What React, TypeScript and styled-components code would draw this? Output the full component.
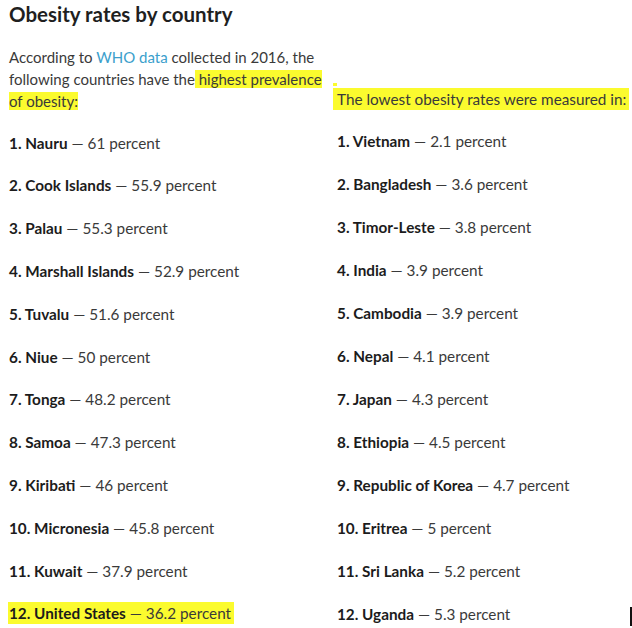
import React from "react";
import styled, { createGlobalStyle } from "styled-components";

const GlobalStyle = createGlobalStyle`
  html, body {
    margin: 0;
    padding: 0;
    background: #fff;
  }
  body {
    font-family: Lato, "Open Sans", Arial, sans-serif;
    color: #3a3a3a;
  }
`;

const Page = styled.main`
  position: relative;
  width: 632px;
  height: 628px;
  padding: 0 0 0 9px;
  box-sizing: border-box;
  overflow: hidden;
`;

const Title = styled.h1`
  margin: 0;
  font-size: 20.5px;
  line-height: 28px;
  font-weight: 700;
  color: #1f1f1f;
`;

const Columns = styled.div`
  display: grid;
  grid-template-columns: 328px 1fr;
  margin-top: 18px;
`;

const Column = styled.section<{ $offset?: number }>`
  padding-top: ${({ $offset }) => $offset || 0}px;
`;

const Intro = styled.p`
  margin: 0;
  font-size: 15px;
  line-height: 22px;
  width: 322px;
`;

const Link = styled.a`
  color: #3c9fcc;
  text-decoration: none;
`;

const Mark = styled.span`
  background: #fbfb2e;
`;

const Heading = styled.p`
  position: relative;
  margin: 0 0 0 -4px;
  font-size: 15.3px;
  line-height: 22px;
  display: inline-block;
  background: #fbfb2e;
  padding: 0 3px 0 4px;

  &::before {
    content: "";
    position: absolute;
    left: 0;
    top: -5px;
    width: 4px;
    height: 3px;
    background: #fbfb2e;
  }
`;

const List = styled.ol<{ $row: number; $top: number }>`
  list-style: none;
  margin: ${({ $top }) => $top}px 0 0;
  padding: 0;

  li {
    font-size: 15.3px;
    line-height: ${({ $row }) => $row}px;
    height: ${({ $row }) => $row}px;
    white-space: nowrap;
  }
`;

const Name = styled.strong`
  font-weight: 700;
  color: #1c1c1c;
`;

const Row = styled.span<{ $marked?: boolean }>`
  background: ${({ $marked }) => ($marked ? "#fbfb2e" : "transparent")};
  padding: 2px 3px 2px 1px;
  margin-left: -1px;
`;

const Caret = styled.div`
  position: absolute;
  left: 630px;
  top: 607px;
  width: 2px;
  height: 19px;
  background: #111;
`;

const highest = [
  ["Nauru", "61"],
  ["Cook Islands", "55.9"],
  ["Palau", "55.3"],
  ["Marshall Islands", "52.9"],
  ["Tuvalu", "51.6"],
  ["Niue", "50"],
  ["Tonga", "48.2"],
  ["Samoa", "47.3"],
  ["Kiribati", "46"],
  ["Micronesia", "45.8"],
  ["Kuwait", "37.9"],
  ["United States", "36.2"],
];

const lowest = [
  ["Vietnam", "2.1"],
  ["Bangladesh", "3.6"],
  ["Timor-Leste", "3.8"],
  ["India", "3.9"],
  ["Cambodia", "3.9"],
  ["Nepal", "4.1"],
  ["Japan", "4.3"],
  ["Ethiopia", "4.5"],
  ["Republic of Korea", "4.7"],
  ["Eritrea", "5"],
  ["Sri Lanka", "5.2"],
  ["Uganda", "5.3"],
];

const Ranking = ({ items, row, top, markLast }: { items: string[][]; row: number; top: number; markLast?: boolean }) => (
  <List $row={row} $top={top}>
    {items.map(([country, value], i) => (
      <li key={country}>
        <Row $marked={markLast && i === items.length - 1}>
          <Name>
            {i + 1}. {country}
          </Name>{" "}
          — {value} percent
        </Row>
      </li>
    ))}
  </List>
);

const App: React.FC = () => {
  return (
    <>
      <GlobalStyle />
      <Page>
        <Title>Obesity rates by country</Title>
        <Columns>
          <Column>
            <Intro>
              According to <Link href="#">WHO data</Link> collected in 2016, the following countries have the
              <Mark> highest prevalence of obesity:</Mark>
            </Intro>
            <Ranking items={highest} row={42.8} top={9.6} markLast />
          </Column>
          <Column $offset={42}>
            <Heading>The lowest obesity rates were measured in:</Heading>
            <Ranking items={lowest} row={43} top={9.5} />
          </Column>
        </Columns>
        <Caret />
      </Page>
    </>
  );
};

export default App;
